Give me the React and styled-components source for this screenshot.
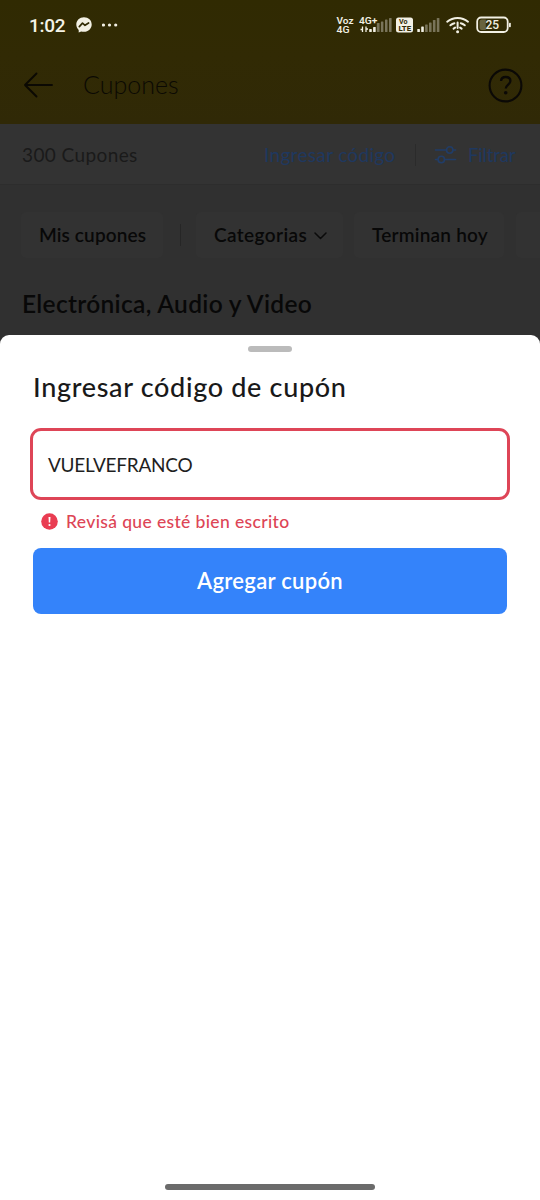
import React from 'react'
import styled, { createGlobalStyle } from 'styled-components';

const GlobalStyle = createGlobalStyle`
  * {
    box-sizing: border-box;
  }

  body {
    margin: 0;
    background: #303030;
    font-family: Lato, 'Open Sans', sans-serif;
  }
`;

const Screen = styled.div`
  display: flex;
  flex-direction: column;
  width: 540px;
  height: 1200px;
  overflow: hidden;
  background: #303030;
`;

const Text = styled.span`
  font-size: ${({ size }) => size}px;
  font-weight: ${({ weight }) => weight || 400};
  letter-spacing: ${({ spacing }) => spacing || 0}px;
  line-height: 1.2;
  color: ${({ color }) => color};
  white-space: nowrap;
`;

const Header = styled.header`
  flex: none;
  height: 124px;
  background: linear-gradient(#302a02, #312a04 45%, #302907);
`;

const StatusBar = styled.div`
  display: flex;
  align-items: center;
  justify-content: space-between;
  height: 50px;
  padding: 0 28px 0 29px;
`;

const StatusLeft = styled.div`
  display: flex;
  align-items: center;
  gap: 10px;
`;

const Clock = styled.span`
  width: 37px;
  padding-top: 1px;
  font: 500 19px Roboto, sans-serif;
  letter-spacing: -0.3px;
  color: #f4f2e6;
`;

const TitleBar = styled.div`
  display: flex;
  align-items: center;
  height: 70px;
  padding: 0 17px 0 23px;
`;

const TitleText = styled.div`
  flex: 1;
  display: flex;
  padding: 0 0 2px 29px;
`;

const ActionBar = styled.div`
  flex: none;
  display: flex;
  align-items: center;
  height: 61px;
  padding: 2px 0 0 22px;
  background: #333333;
  border-bottom: 1px solid #2d2d2d;
`;

const Count = styled.div`
  width: 242px;
  display: flex;
`;

const CodeLink = styled.div`
  width: 151px;
  display: flex;
`;

const Separator = styled.div`
  flex: none;
  width: 1px;
  height: 22px;
  background: #2b2b2b;
`;

const Filter = styled.div`
  display: flex;
  align-items: center;
  gap: 11px;
  padding-left: 18px;
`;

const Chips = styled.div`
  flex: none;
  display: flex;
  align-items: center;
  height: 46px;
  margin: 27px 0 0 21px;
`;

const Chip = styled.div`
  flex: none;
  display: flex;
  align-items: center;
  gap: 7px;
  width: ${({ width }) => width}px;
  height: 46px;
  padding: 1px 0 0 18px;
  margin-right: ${({ gap }) => gap || 0}px;
  background: #323232;
  border-radius: 5px;
`;

const ChipSeparator = styled(Separator)`
  margin-right: 15px;
  background: #262626;
`;

const Section = styled.div`
  flex: none;
  display: flex;
  align-items: center;
  height: 77px;
  padding: 15px 22px 0;
`;

const Sheet = styled.section`
  flex: 1;
  display: flex;
  flex-direction: column;
  padding: 11px 30px 10px;
  background: #ffffff;
  border-radius: 9px 9px 0 0;
`;

const Handle = styled.div`
  align-self: center;
  width: 44px;
  height: 6px;
  border-radius: 3px;
  background: #bbbbbb;
`;

const SheetTitle = styled.h1`
  display: flex;
  margin: 19px 0 0 3px;
  height: 33px;
`;

const Field = styled.div`
  display: flex;
  align-items: center;
  height: 72px;
  margin-top: 24px;
  padding: 2px 0 0 15px;
  border: 3px solid #de4557;
  border-radius: 11px;
`;

const ErrorMessage = styled.div`
  display: flex;
  align-items: center;
  gap: 8px;
  height: 42px;
  padding-left: 11px;
`;

const Button = styled.div`
  display: flex;
  align-items: center;
  justify-content: center;
  height: 66px;
  margin: 6px 3px 0;
  padding-top: 1px;
  border-radius: 8px;
  background: #3483fa;
`;

const HomeIndicator = styled.div`
  align-self: center;
  width: 210px;
  height: 6px;
  margin-top: auto;
  border-radius: 3px;
  background: #6b6b6b;
`;

const Messenger = () => (
  <svg width="16" height="16" viewBox="0 0 16 16">
    <path d="M8 .3C3.600.3.3 3.500.3 7.600c0 2.200.9 4 2.400 5.300V15.600l2.500-1.200c.9.300 1.800.4 2.800.4 4.400 0 7.700-3.200 7.700-7.300S12.400.3 8 .3z" fill="#f2f0e4" />
    <path d="M3.300 9.600 6.500 6.200 9 8.300 12.600 6" fill="none" stroke="#312b05" strokeWidth="1.700" strokeLinejoin="round" strokeLinecap="round" />
  </svg>
)

const Dots = () => (
  <svg width="18" height="4" viewBox="1.500 0 18 4" fill="#f2f0e4">
    <circle cx="3" cy="2" r="1.600" />
    <circle cx="9" cy="2" r="1.600" />
    <circle cx="15.200" cy="2" r="1.600" />
  </svg>
)

const Signal = ({ x, bars }) => bars.map((height, i) => (
  <rect key={i} x={x + i * 3.900} y={32 - height} width="2.600" height={height} rx=".6" fill={i < 2 ? '#f2f0e4' : '#79745a'} />
))

const StatusIcons = () => (
  <svg width="176" height="50" viewBox="336 0 176 50" fill="#f2f0e4" fontFamily="Roboto, sans-serif">
    <text x="336.500" y="23.500" fontSize="9.500" fontWeight="600" textLength="17" lengthAdjust="spacingAndGlyphs">Voz</text>
    <text x="336.500" y="32.700" fontSize="9" fontWeight="500" textLength="13" lengthAdjust="spacingAndGlyphs">4G</text>
    <text x="359" y="24" fontSize="9.800" fontWeight="600" textLength="18.500" lengthAdjust="spacingAndGlyphs">4G+</text>
    <path d="M362.500 26.500v5.500M360.500 29.500h2M366 32v-5.500M366 29h2" stroke="#f2f0e4" strokeWidth="1.300" fill="none" />
    <Signal x={369.2} bars={[3, 5]} />
    <rect x="376.800" y="23" width="2.800" height="9" rx=".6" fill="#79745a" />
    <rect x="380.900" y="21.500" width="2.500" height="10.500" rx=".6" fill="#79745a" />
    <rect x="385" y="19.500" width="2.500" height="12.500" rx=".6" fill="#79745a" />
    <rect x="389" y="18" width="2.600" height="14" rx=".6" fill="#79745a" />
    <rect x="396" y="17.500" width="17" height="15" rx="2.500" />
    <text x="399" y="24.300" fontSize="7.500" fontWeight="700" fill="#312b05" textLength="8.500" lengthAdjust="spacingAndGlyphs">Vo</text>
    <text x="398.500" y="31.300" fontSize="7.200" fontWeight="800" fill="#312b05" textLength="12.500" lengthAdjust="spacingAndGlyphs">LTE</text>
    <Signal x={417.3} bars={[3, 5.5, 7.5, 9.5, 12, 14]} />
    <g fill="none" stroke="#f2f0e4" strokeWidth="2" strokeLinecap="round">
      <path d="M447.200 21.700c6-5 14.800-5 20.800 0" />
      <path d="M450.400 25.300c1.200-1 2.500-1.800 4-2.100M460.800 23.200c1.500.3 2.800 1.100 4 2.100" />
      <path d="M453.600 28.600l1.500-1M461.600 28.600l-1.500-1M457.600 22.500v5.500" />
    </g>
    <circle cx="457.600" cy="31.700" r="1.500" />
    <rect x="477.200" y="17.500" width="30.500" height="14.500" rx="4" fill="none" stroke="#f2f0e4" strokeWidth="1.800" />
    <path d="M479.500 22c0-1.500.8-2.500 2.300-2.500h4v10.500h-4c-1.500 0-2.300-1-2.300-2.500z" fill="#68633f" />
    <rect x="509" y="22.700" width="1.800" height="4.500" rx=".8" />
    <text x="485.500" y="29.300" fontSize="12" fontWeight="500" textLength="13.500">25</text>
  </svg>
)

const BackArrow = () => (
  <svg width="31" height="28" viewBox="0 0 31 28" fill="none" stroke="#0b0903" strokeWidth="1.900" strokeLinecap="round" strokeLinejoin="round">
    <path d="M29 14H2M13.500 2.500 2 14l11.500 11.500" />
  </svg>
)

const Help = () => (
  <svg width="35" height="35" viewBox="0 0 35 35" fill="none" stroke="#0b0906">
    <circle cx="17.500" cy="17.500" r="15.900" strokeWidth="2.100" />
    <path d="M13 13c.2-2.500 2-4 4.600-4 2.800 0 4.800 1.500 4.800 4 0 3.500-4.600 3.600-4.600 7.500" strokeWidth="2.300" />
    <circle cx="17.700" cy="24.800" r="1.800" fill="#0b0906" stroke="none" />
  </svg>
)

const Sliders = () => (
  <svg width="23" height="19" viewBox="0 0 23 19" fill="none" stroke="#213d68" strokeWidth="1.600" strokeLinecap="round">
    <path d="M1.500 4h11M19 4h2.500M1.500 13.500h2.500M10.500 13.500h11" />
    <circle cx="15.700" cy="4" r="3.200" />
    <circle cx="7.300" cy="13.500" r="3.200" />
  </svg>
)

const Chevron = () => (
  <svg width="13" height="8" viewBox="0 0 13 8" fill="none" stroke="#0a0a0a" strokeWidth="1.500" strokeLinecap="round" strokeLinejoin="round">
    <path d="M1 1l5.500 5.500L12 1" />
  </svg>
)

const ErrorIcon = () => (
  <svg width="17" height="17" viewBox="0 0 17 17">
    <circle cx="8.500" cy="8.500" r="8.300" fill="#e93d52" />
    <path d="M7.500 4h2l-.3 5.500H7.800z" fill="#ffffff" />
    <circle cx="8.500" cy="12" r="1.100" fill="#ffffff" />
  </svg>
)

const App = () => {
  return (
    <Screen>
      <GlobalStyle />
      <Header>
        <StatusBar>
          <StatusLeft>
            <Clock>1:02</Clock>
            <Messenger />
            <Dots />
          </StatusLeft>
          <StatusIcons />
        </StatusBar>
        <TitleBar>
          <BackArrow />
          <TitleText><Text size={25} weight={300} color="#0b0903">Cupones</Text></TitleText>
          <Help />
        </TitleBar>
      </Header>
      <ActionBar>
        <Count><Text size={19} spacing={0.4} color="#1a1a1a">300 Cupones</Text></Count>
        <CodeLink><Text size={19} spacing={0.32} color="#1f385f">Ingresar código</Text></CodeLink>
        <Separator />
        <Filter>
          <Sliders />
          <Text size={18.5} spacing={-0.15} color="#1f385f">Filtrar</Text>
        </Filter>
      </ActionBar>
      <Chips>
        <Chip width={142} gap={17}><Text size={19} weight={600} spacing={0.12} color="#080808">Mis cupones</Text></Chip>
        <ChipSeparator />
        <Chip width={147} gap={11}>
          <Text size={19} weight={600} spacing={0.4} color="#080808">Categorias</Text>
          <Chevron />
        </Chip>
        <Chip width={150} gap={12}><Text size={19} weight={600} spacing={0.22} color="#080808">Terminan hoy</Text></Chip>
        <Chip width={40} />
      </Chips>
      <Section><Text size={24.5} weight={600} spacing={0.32} color="#080808">Electrónica, Audio y Video</Text></Section>
      <Sheet>
        <Handle />
        <SheetTitle><Text size={27} weight={500} spacing={0.67} color="#191919">Ingresar código de cupón</Text></SheetTitle>
        <Field><Text size={19} spacing={-0.25} color="#1f1f1f">VUELVEFRANCO</Text></Field>
        <ErrorMessage>
          <ErrorIcon />
          <Text size={17.5} weight={500} spacing={0.36} color="#dd4556">Revisá que esté bien escrito</Text>
        </ErrorMessage>
        <Button><Text size={22} weight={600} spacing={0.3} color="#ffffff">Agregar cupón</Text></Button>
        <HomeIndicator />
      </Sheet>
    </Screen>
  )
}

export default App
